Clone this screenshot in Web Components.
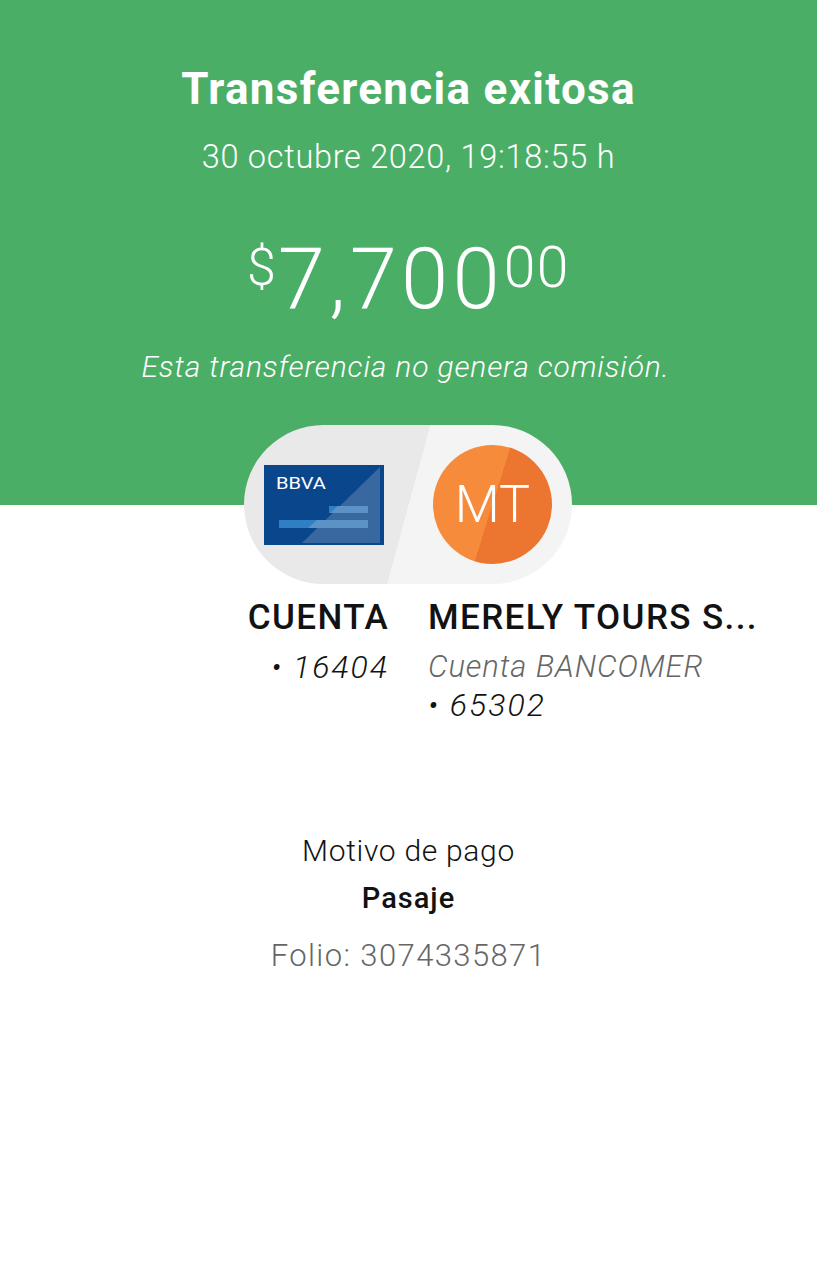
<!DOCTYPE html>
<html lang="es">
<head>
<meta charset="utf-8">
<title>Transferencia exitosa</title>
<style>
  html, body { margin: 0; background: #fff; }
  body { font-family: Roboto, "Liberation Sans", sans-serif; color: #121212; }
</style>
</head>
<body>
<transfer-screen>
  <transfer-hero slot="hero" date="30 octubre 2020, 19:18:55 h" note="Esta transferencia no genera comisión.">
    Transferencia exitosa
  </transfer-hero>
  <account-pill slot="pill" initials="MT"></account-pill>
  <account-column slot="from" align="right" name="CUENTA" number="• 16404"></account-column>
  <account-column slot="to" name="MERELY TOURS S..." bank="Cuenta BANCOMER" number="• 65302"></account-column>
  <payment-detail slot="detail" label="Motivo de pago" value="Pasaje" folio="Folio: 3074335871"></payment-detail>
</transfer-screen>

<script>
  class TransferScreen extends HTMLElement {
    constructor() {
      super();
      this.attachShadow({ mode: "open" }).innerHTML = `
        <style>
          :host { display: block; width: 817px; height: 1280px; overflow: hidden; background: #fff; }
          .pill { display: flex; padding-left: 244px; margin-top: -80px; position: relative; }
          .accounts { display: grid; grid-template-columns: 389px 1fr; column-gap: 39px; margin-top: 14px; }
          .detail { margin-top: 107px; }
        </style>
        <slot name="hero"></slot>
        <div class="pill"><slot name="pill"></slot></div>
        <div class="accounts">
          <slot name="from"></slot>
          <slot name="to"></slot>
        </div>
        <div class="detail"><slot name="detail"></slot></div>
      `;
    }
  }

  class TransferHero extends HTMLElement {
    constructor() {
      super();
      this.attachShadow({ mode: "open" }).innerHTML = `
        <style>
          :host {
            display: block; height: 505px; box-sizing: border-box; padding-top: 64px;
            background: #4bae67; color: #fff; text-align: center;
          }
          h1 { margin: 0; font-size: 44px; line-height: 50px; font-weight: 700; letter-spacing: 1.3px; }
          .date { margin-top: 25px; font-size: 32.5px; line-height: 36px; font-weight: 300; letter-spacing: 0.7px; }
          .amount {
            display: flex; justify-content: center; align-items: flex-start;
            margin-top: 69px; height: 90px; font-weight: 300; line-height: 1;
          }
          .cur { font-size: 52px; margin-top: -2px; margin-right: 2px; }
          .int { font-size: 85px; margin-top: -7px; letter-spacing: 4.2px; }
          .dec { font-size: 57px; margin-top: -5px; letter-spacing: 1.5px; }
          .note {
            margin-top: 15px; padding-right: 6px; font-size: 30px; line-height: 36px;
            font-weight: 300; font-style: italic; letter-spacing: 0.85px;
          }
        </style>
        <h1><slot></slot></h1>
        <div class="date"></div>
        <div class="amount">
          <span class="cur">$</span><span class="int">7,700</span><span class="dec">00</span>
        </div>
        <div class="note"></div>
      `;
      this.shadowRoot.querySelector(".date").textContent = this.getAttribute("date");
      this.shadowRoot.querySelector(".note").textContent = this.getAttribute("note");
    }
  }

  class AccountPill extends HTMLElement {
    constructor() {
      super();
      this.attachShadow({ mode: "open" }).innerHTML = `
        <style>
          :host { display: block; }
          .pill {
            display: flex; align-items: center; width: 328px; height: 159px; box-sizing: border-box;
            padding-left: 20px; border-radius: 80px;
            background: linear-gradient(105.2deg, #e9e9e9 0 50.2%, #f4f4f4 50.2% 100%);
          }
          svg { display: block; }
          .avatar {
            display: flex; align-items: center; justify-content: center;
            width: 119px; height: 119px; margin-left: 49px; border-radius: 50%;
            background: linear-gradient(107.4deg, #f78b3c 0 50%, #ec7530 50% 100%);
            color: #fff; font-size: 52px; font-weight: 300;
          }
        </style>
        <div class="pill">
          <svg width="120" height="80" viewBox="0 0 120 80">
            <rect width="120" height="80" fill="#0a468b"/>
            <path d="M116 2V78H38Z" fill="#38689f"/>
            <rect x="65" y="41" width="39" height="7" fill="#2f7fc4"/>
            <rect x="15" y="55" width="89" height="8" fill="#2f7fc4"/>
            <path d="M74 41H104V48H66ZM53 55H104V63H44Z" fill="#5c93c6"/>
            <text x="12" y="24" fill="#fff" font-family="Roboto, sans-serif" font-size="16.5" font-weight="400" textLength="50" lengthAdjust="spacingAndGlyphs">BBVA</text>
          </svg>
          <div class="avatar"></div>
        </div>
      `;
      this.shadowRoot.querySelector(".avatar").textContent = this.getAttribute("initials");
    }
  }

  class AccountColumn extends HTMLElement {
    constructor() {
      super();
      this.attachShadow({ mode: "open" }).innerHTML = `
        <style>
          :host { display: block; min-width: 0; }
          :host([align="right"]) { text-align: right; }
          .name { font-size: 35px; line-height: 40px; font-weight: 500; letter-spacing: 1.4px; color: #121212; white-space: nowrap; }
          .bank, .number { line-height: 38px; font-style: italic; font-weight: 300; }
          .bank { font-size: 31px; letter-spacing: 0.9px; color: #666; }
          .number { font-size: 32px; letter-spacing: 2px; }
          .first { margin-top: 10px; }
        </style>
        <div class="name"></div>
        <div class="lines first"></div>
      `;
      const root = this.shadowRoot;
      root.querySelector(".name").textContent = this.getAttribute("name");
      const lines = root.querySelector(".lines");
      for (const key of ["bank", "number"]) {
        if (!this.hasAttribute(key)) continue;
        const row = document.createElement("div");
        row.className = key;
        row.textContent = this.getAttribute(key);
        lines.appendChild(row);
      }
    }
  }

  class PaymentDetail extends HTMLElement {
    constructor() {
      super();
      this.attachShadow({ mode: "open" }).innerHTML = `
        <style>
          :host { display: block; text-align: center; }
          .label { font-size: 30px; line-height: 40px; font-weight: 300; letter-spacing: 0.7px; }
          .value { margin-top: 7px; font-size: 29px; line-height: 40px; font-weight: 500; letter-spacing: 1px; }
          .folio { margin-top: 18px; font-size: 31px; line-height: 40px; font-weight: 300; letter-spacing: 1.4px; color: #666; }
        </style>
        <div class="label"></div>
        <div class="value"></div>
        <div class="folio"></div>
      `;
      for (const key of ["label", "value", "folio"]) {
        this.shadowRoot.querySelector("." + key).textContent = this.getAttribute(key);
      }
    }
  }

  customElements.define("transfer-screen", TransferScreen);
  customElements.define("transfer-hero", TransferHero);
  customElements.define("account-pill", AccountPill);
  customElements.define("account-column", AccountColumn);
  customElements.define("payment-detail", PaymentDetail);
</script>
</body>
</html>
